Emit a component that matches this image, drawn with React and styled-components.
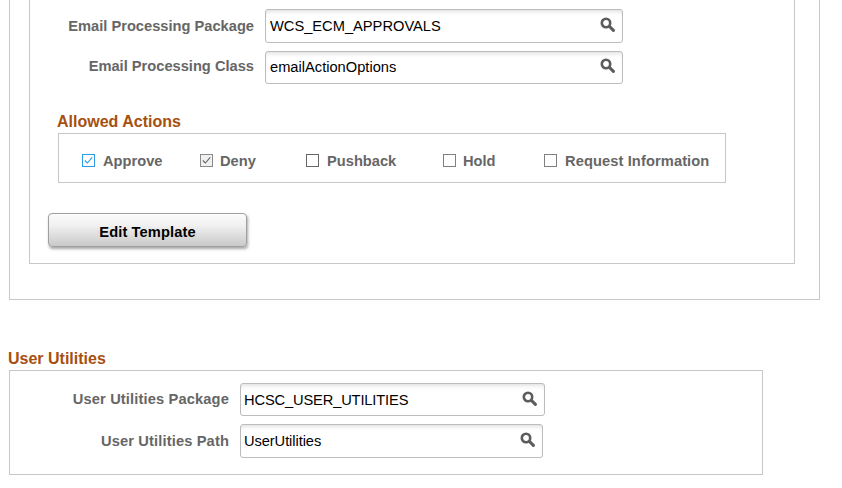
import React from 'react'
import styled, { createGlobalStyle } from 'styled-components'

const Global = createGlobalStyle`
  html, body {
    margin: 0;
    padding: 0;
    background: #fff;
    overflow: hidden;
    font-family: "Liberation Sans", Arial, sans-serif;
  }
`

const Page = styled.div`
  width: 842px;
  height: 488px;
  overflow: hidden;
`

const OuterPanel = styled.div`
  box-sizing: border-box;
  width: 811px;
  height: 300px;
  margin-left: 9px;
  padding-left: 19px;
  border: 1px solid #c8c8c8;
  border-top: none;
`

const InnerPanel = styled.div`
  box-sizing: border-box;
  width: 766px;
  height: 264px;
  padding-top: 9px;
  border: 1px solid #c8c8c8;
  border-top: none;
`

const Fields = styled.div`
  display: flex;
  flex-direction: column;
  gap: ${p => p.$gap}px;
`

const FieldRow = styled.div`
  display: flex;
  align-items: center;
  height: ${p => p.$h}px;
`

const Label = styled.label`
  width: ${p => p.$w}px;
  padding: 0 11px ${p => p.$lift || 0}px 0;
  box-sizing: border-box;
  text-align: right;
  font-size: 14.67px;
  font-weight: bold;
  letter-spacing: ${p => p.$track || 0}px;
  color: #666;
`

const Lookup = styled.div`
  box-sizing: border-box;
  display: flex;
  align-items: center;
  justify-content: space-between;
  width: ${p => p.$w}px;
  height: 100%;
  padding: 0 7px ${p => p.$lift || 0}px ${p => p.$pad}px;
  background: #fff;
  border: 1px solid #bcbcbc;
  border-radius: 3px;
  box-shadow: inset 0 4px 5px -3px #d8d8d8;
  font-size: 14.67px;
  letter-spacing: ${p => p.$track || 0}px;
  color: #000;
`

const SearchIcon = () => (
  <svg width="15" height="15" viewBox="0 0 15 15" style={{ marginTop: '-3px' }}>
    <circle cx="6" cy="6" r="4.2" fill="none" stroke="#5c5c5c" strokeWidth="2.6" />
    <path d="M9.4 9.4 L13.4 13.4" stroke="#5c5c5c" strokeWidth="3" strokeLinecap="round" />
  </svg>
)

const Heading = styled.h2`
  margin: ${p => p.$margin};
  font-size: 16px;
  line-height: 18px;
  font-weight: bold;
  color: #a6500f;
`

const ActionBox = styled.div`
  box-sizing: border-box;
  display: flex;
  align-items: center;
  width: 668px;
  height: 50px;
  margin: 2px 0 0 28px;
  padding: 5px 0 0 23px;
  border: 1px solid #c8c8c8;
`

const Action = styled.div`
  display: flex;
  align-items: center;
  gap: ${p => p.$gap}px;
  width: ${p => p.$w}px;
  font-size: 14.67px;
  font-weight: bold;
  letter-spacing: ${p => p.$track || 0}px;
  color: #666;
`

const Box = styled.span`
  box-sizing: border-box;
  display: flex;
  align-items: center;
  justify-content: center;
  width: 13px;
  height: 13px;
  margin-top: -1px;
  background: ${p => (p.$muted ? '#f0f0f0' : '#fff')};
  border: 1px solid ${p => p.$color};
`

const Check = ({ color }) => (
  <svg width="9" height="9" viewBox="0 0 9 9">
    <path d="M0.8 4.5 L3.4 7 L8.2 1.3" fill="none" stroke={color} strokeWidth="1.1" />
  </svg>
)

const EditButton = styled.button`
  display: block;
  box-sizing: border-box;
  width: 199px;
  height: 34px;
  margin: 30px 0 0 18px;
  padding: 3px 0 0;
  border: 1px solid #a0a0a0;
  border-radius: 4px;
  background: linear-gradient(#fbfbfb, #f1f1f1 35%, #c9c9c9);
  box-shadow: 1px 2px 3px rgba(0, 0, 0, 0.35);
  font-family: inherit;
  font-size: 14.67px;
  font-weight: bold;
  letter-spacing: 0.1px;
  color: #000;
`

const UtilitiesBox = styled.div`
  box-sizing: border-box;
  width: 754px;
  height: 105px;
  margin: 2px 0 0 9px;
  padding-top: 12px;
  border: 1px solid #c8c8c8;
`

const actions = [
  { name: 'Approve', w: 118, gap: 8, color: '#2b9be6', tick: '#2b9be6' },
  { name: 'Deny', w: 106, gap: 7, color: '#8a8a8a', tick: '#666', muted: true },
  { name: 'Pushback', w: 137, gap: 8, color: '#666' },
  { name: 'Hold', w: 101, gap: 7, color: '#808080' },
  { name: 'Request Information', w: 170, gap: 8, track: 0.1, color: '#808080' },
]

function App() {
  return (
    <Page>
      <Global />
      <OuterPanel>
        <InnerPanel>
          <Fields $gap={8}>
            <FieldRow $h={34}>
              <Label $w={235}>Email Processing Package</Label>
              <Lookup $w={358} $pad={4}>WCS_ECM_APPROVALS<SearchIcon /></Lookup>
            </FieldRow>
            <FieldRow $h={33}>
              <Label $w={235} $lift={3}>Email Processing Class</Label>
              <Lookup $w={358} $pad={4} $lift={2}>emailActionOptions<SearchIcon /></Lookup>
            </FieldRow>
          </Fields>
          <Heading $margin="29px 0 0 27px">Allowed Actions</Heading>
          <ActionBox>
            {actions.map(a => (
              <Action key={a.name} $w={a.w} $gap={a.gap} $track={a.track}>
                <Box $color={a.color} $muted={a.muted}>
                  {a.tick && <Check color={a.tick} />}
                </Box>
                {a.name}
              </Action>
            ))}
          </ActionBox>
          <EditButton>Edit Template</EditButton>
        </InnerPanel>
      </OuterPanel>
      <Heading $margin="50px 0 0 8px">User Utilities</Heading>
      <UtilitiesBox>
        <Fields $gap={8}>
          <FieldRow $h={33}>
            <Label $w={230} $lift={2} $track={0.14}>User Utilities Package</Label>
            <Lookup $w={305} $pad={3} $track={-0.14}>HCSC_USER_UTILITIES<SearchIcon /></Lookup>
          </FieldRow>
          <FieldRow $h={34}>
            <Label $w={230} $track={0.14}>User Utilities Path</Label>
            <Lookup $w={303} $pad={3} $track={-0.08}>UserUtilities<SearchIcon /></Lookup>
          </FieldRow>
        </Fields>
      </UtilitiesBox>
    </Page>
  )
}

export default App
